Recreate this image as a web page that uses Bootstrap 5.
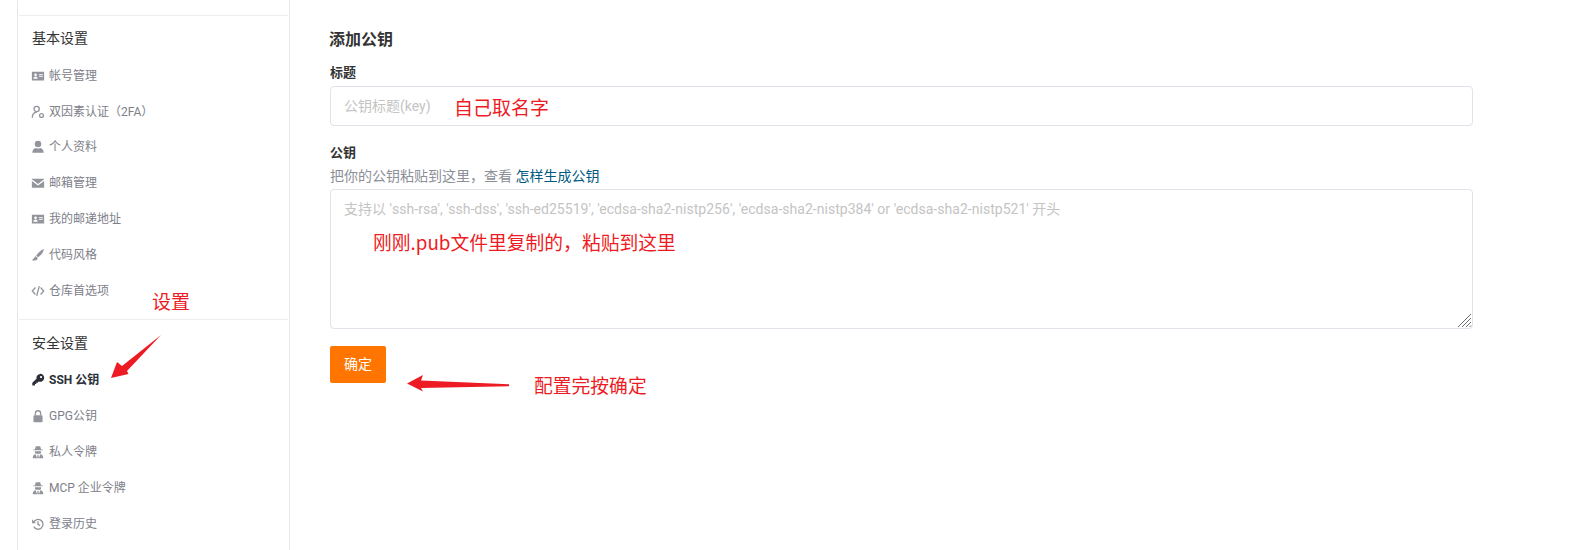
<!DOCTYPE html>
<html lang="zh-CN">
<head>
<meta charset="utf-8">
<title>添加公钥</title>
<link href="https://cdn.jsdelivr.net/npm/bootstrap@5.3.0/dist/css/bootstrap.min.css" rel="stylesheet">
<style>
html,body{height:550px;overflow:hidden;background:#fff}
body{font-family:Roboto,"Noto Sans CJK SC",sans-serif;color:#40485b}
.ln{fill:none;stroke:#93959c;stroke-width:1.5}
.stage{height:550px;padding-left:17px}
.side-panel{width:273px;flex:none;height:550px;border-left:1px solid #e6e6ea;border-right:1px solid #e6e6ea;padding:15px 1px 0}
.side-group{border-top:1px solid #eeeeee;padding:12px 0 10px}
.side-group+.side-group{padding-top:13px}
.side-title{font-size:14px;line-height:21px;color:#333;padding-left:13px;margin-bottom:9px}
.side-item{display:flex;align-items:center;height:35.8px;padding-left:12px;font-size:12px;color:#7d8089;text-decoration:none}
.side-item svg{width:14px;height:14px;flex:none;margin-right:4px;fill:#93959c}
.side-item.on{color:#2b2f38;font-weight:700}
.side-item.on svg{fill:#2b2f38}
.main-pane{width:1183px;padding:28px 0 0 40px}
.pane-title{font-size:16px;line-height:24px;font-weight:700;color:#333;margin-bottom:11px;margin-left:-1px}
.fld-label{display:block;font-size:13px;line-height:20px;font-weight:700;color:#333;margin-bottom:3px}
.fld-input.form-control{height:40px;font-size:14px;padding:0 13px;border:1px solid #e1e2ea;border-radius:4px;color:#40485b}
.fld-area.form-control{height:140px;font-size:14px;line-height:21px;letter-spacing:.03px;padding:9px 13px;border:1px solid #e1e2ea;border-radius:4px}
.fld-area::-webkit-resizer{background:url("data:image/svg+xml,%3Csvg xmlns='http://www.w3.org/2000/svg' width='15' height='15'%3E%3Cpath d='M1 14 14 1M5 14 14 5M9 14 14 9M12.500 14 14 12.500' stroke='%23707070' stroke-width='1' fill='none'/%3E%3C/svg%3E") no-repeat right bottom}
.fld-input::placeholder,.fld-area::placeholder{color:#c4c4c4;opacity:1}
.fld-help{font-size:14px;line-height:20px;color:#8c8f98;margin:3px 0 3px}
.fld-help a{color:#005980;text-decoration:none}
.gap-field{margin-top:17px}
.ok-btn.btn{width:56px;height:37px;margin-top:17px;padding:0;font-size:14px;font-weight:400;background:#ff7500;border:0;border-radius:2px;color:#fff}
.note{position:absolute;color:#ed1c24;font-family:"Noto Sans CJK SC",sans-serif;font-size:19px;line-height:26px;white-space:nowrap}
.n1{left:454px;top:94px}
.n2{left:373px;top:229px;font-size:18.800px}
.n3{left:152px;top:288px}
.n4{left:534px;top:372px;font-size:18.800px}
.arrows{position:absolute;left:0;top:0;width:1596px;height:550px;pointer-events:none}
</style>
</head>
<body>
<svg width="0" height="0" class="position-absolute">
<defs>
<symbol id="i-card" viewBox="0 0 16 16"><path fill-rule="evenodd" d="M1 3h14v10H1zM5.200 5a1.500 1.500 0 1 0 0 3 1.500 1.500 0 0 0 0-3zM2.800 11h4.800c0-1.500-1-2.400-2.400-2.400S2.800 9.500 2.800 11zM9 6v1h4.500V6zM9 8.200v1h4.500v-1z"/></symbol>
<symbol id="i-2fa" viewBox="0 0 16 16"><circle class="ln" cx="6.500" cy="4.500" r="3"/><path class="ln" d="M1.500 14.500c0-3.500 2-6 5-6"/><circle class="ln" cx="12" cy="12" r="2.200"/></symbol>
<symbol id="i-user" viewBox="0 0 16 16"><circle cx="8" cy="4.500" r="3.700"/><path d="M1.500 14.500c0-3.500 2.500-5.300 4-5.300 1 .8 4 .8 5 0 1.500 0 4 1.800 4 5.300z"/></symbol>
<symbol id="i-mail" viewBox="0 0 16 16"><path d="M1 3h14v.8L8 9 1 3.800z"/><path d="M1 5.600V13.500h14V5.600L8 10.800z"/></symbol>
<symbol id="i-brush" viewBox="0 0 16 16"><path d="M15 1C11.500 2 7.500 5.500 6 8.800l2 1.800C10.700 9 14 5 15 1z"/><path d="M5.300 9.300C3.500 9.800 3.800 12.500 1 13.600c3 1.500 6.600.3 6.700-2.300z"/></symbol>
<symbol id="i-code" viewBox="0 0 16 16"><path class="ln" d="M5 4 1.500 8 5 12M11 4l3.500 4L11 12M9.500 2.500l-3 11"/></symbol>
<symbol id="i-key" viewBox="0 0 16 16"><path fill-rule="evenodd" d="M10.500 1a4.500 4.500 0 1 1-1.500 8.700L7.500 11.200H6v1.500H4.500v1.500h-3v-3L6.300 6.500A4.500 4.500 0 0 1 10.500 1zM11.500 3.300a1.300 1.300 0 1 0 0 2.600 1.300 1.300 0 0 0 0-2.600z"/></symbol>
<symbol id="i-lock" viewBox="0 0 16 16"><rect x="2.800" y="7" width="10.400" height="8" rx="1"/><path class="ln" d="M5 7.500V5a3 3 0 0 1 6 0v2.500"/></symbol>
<symbol id="i-spy" viewBox="0 0 16 16"><path d="M5.500 1.500h5l1 3.500h2v1h-11V5h2zM4.500 7h7v1.500c0 1-1 1.500-1.700 1.500H6.200c-.7 0-1.700-.5-1.700-1.500zM2 15c0-3 1.500-4.300 3.300-4.300L7 15zM14 15c0-3-1.500-4.300-3.300-4.300L9 15zM7.400 11h1.200l.4 4H7z"/></symbol>
<symbol id="i-hist" viewBox="0 0 16 16"><path class="ln" d="M3 6.200A5.600 5.600 0 1 1 3.200 11M8 4.800v3.600l2.400 1.500"/><path d="M1.200 2.500v4.500h4.500z"/></symbol>
</defs>
</svg>
<div class="stage d-flex position-relative">
  <aside class="side-panel">
    <div class="side-group">
      <div class="side-title">基本设置</div>
      <a class="side-item" href="#"><svg><use href="#i-card"/></svg>帐号管理</a>
      <a class="side-item" href="#"><svg><use href="#i-2fa"/></svg>双因素认证（2FA）</a>
      <a class="side-item" href="#"><svg><use href="#i-user"/></svg>个人资料</a>
      <a class="side-item" href="#"><svg><use href="#i-mail"/></svg>邮箱管理</a>
      <a class="side-item" href="#"><svg><use href="#i-card"/></svg>我的邮递地址</a>
      <a class="side-item" href="#"><svg><use href="#i-brush"/></svg>代码风格</a>
      <a class="side-item" href="#"><svg><use href="#i-code"/></svg>仓库首选项</a>
    </div>
    <div class="side-group">
      <div class="side-title">安全设置</div>
      <a class="side-item on" href="#"><svg><use href="#i-key"/></svg>SSH 公钥</a>
      <a class="side-item" href="#"><svg><use href="#i-lock"/></svg>GPG公钥</a>
      <a class="side-item" href="#"><svg><use href="#i-spy"/></svg>私人令牌</a>
      <a class="side-item" href="#"><svg><use href="#i-spy"/></svg>MCP 企业令牌</a>
      <a class="side-item" href="#"><svg><use href="#i-hist"/></svg>登录历史</a>
    </div>
  </aside>
  <main class="main-pane">
    <div class="pane-title">添加公钥</div>
    <form>
      <label class="fld-label">标题</label>
      <input class="form-control fld-input" type="text" placeholder="公钥标题(key)">
      <div class="gap-field">
        <label class="fld-label mb-0">公钥</label>
        <div class="fld-help">把你的公钥粘贴到这里，查看 <a href="#">怎样生成公钥</a></div>
        <textarea class="form-control fld-area" placeholder="支持以 'ssh-rsa', 'ssh-dss', 'ssh-ed25519', 'ecdsa-sha2-nistp256', 'ecdsa-sha2-nistp384' or 'ecdsa-sha2-nistp521' 开头"></textarea>
      </div>
      <button type="button" class="btn ok-btn">确定</button>
    </form>
  </main>
  <span class="note n1">自己取名字</span>
  <span class="note n2">刚刚.pub文件里复制的，粘贴到这里</span>
  <span class="note n3">设置</span>
  <span class="note n4">配置完按确定</span>
  <svg class="arrows" viewBox="0 0 1596 550">
    <polygon fill="#ed1c24" points="161,335 127,371 128.500,374 111,378 117,362 122,366"/>
    <polygon fill="#ed1c24" points="509,384.300 509,386.200 421,388 423,391.500 407,383.500 423,375 421,380.500"/>
  </svg>
</div>
</body>
</html>
